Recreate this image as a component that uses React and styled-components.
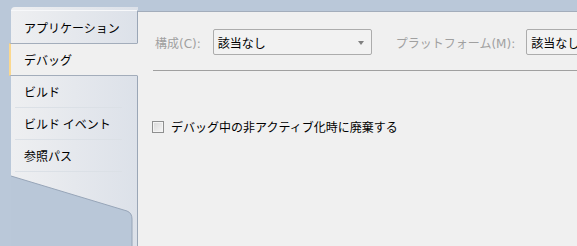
import React from "react";
import styled, { createGlobalStyle } from "styled-components";

const GlobalStyle = createGlobalStyle`
  html, body {
    margin: 0;
    padding: 0;
    height: 100%;
    overflow: hidden;
  }
  body {
    font-family: "Noto Sans CJK JP", "Noto Sans", sans-serif;
    font-size: 12px;
    background: #bac8d9;
  }
  #root {
    height: 100%;
  }
`;

const tabs = ["アプリケーション", "デバッグ", "ビルド", "ビルド イベント", "参照パス"];

function App() {
  return (
    <>
      <GlobalStyle />
      <Page>
        <Sidebar>
          {tabs.map((t, i) => (
            <Tab key={t} $active={i === 1} $first={i === 0}>
              {t}
            </Tab>
          ))}
          <Tail>
            <svg width="126" height="80" viewBox="0 0 126 80">
              <path
                d="M0 4 L116 39 Q121 41 121 47 L121 80 L0 80 Z"
                fill="#b9c7d8"
              />
              <path
                d="M0 4 L116 39 Q121 41 121 47 L121 80"
                fill="none"
                stroke="#97a5b8"
                strokeWidth="1"
              />
            </svg>
          </Tail>
        </Sidebar>
        <Content>
          <Toolbar>
            <Label>構成(C):</Label>
            <Combo>
              該当なし
              <Arrow />
            </Combo>
            <Label $wide>プラットフォーム(M):</Label>
            <Combo>
              該当なし
              <Arrow />
            </Combo>
          </Toolbar>
          <Rule />
          <CheckRow>
            <Check />
            <span>デバッグ中の非アクティブ化時に廃棄する</span>
          </CheckRow>
        </Content>
      </Page>
    </>
  );
}

export default App;

const Page = styled.div`
  display: flex;
  height: 100%;
`;

const Sidebar = styled.div`
  width: 127px;
  margin-left: 11px;
  margin-top: 7px;
  padding-top: 3px;
  display: flex;
  flex-direction: column;
  flex-shrink: 0;
  border-top-left-radius: 4px;
  background: linear-gradient(to right, #eeeff1, #dce1e9);
`;

const Tab = styled.div`
  position: relative;
  display: flex;
  align-items: center;
  box-sizing: border-box;
  height: ${(p) => (p.$first ? "34px" : "32px")};
  padding-left: 13px;
  padding-bottom: 1px;
  color: #000;
  white-space: nowrap;
  border-right: 1px solid #9aa6b6;
  border-top: ${(p) => (p.$first ? "1px solid #f7f8fa" : "none")};

  &::after {
    content: "";
    position: absolute;
    left: 4px;
    right: 15px;
    bottom: 0;
    height: 1px;
    background: #dbe0e6;
  }

  ${(p) =>
    p.$active &&
    `
    height: 33px;
    margin-top: -1px;
    margin-left: -2px;
    padding-left: 13px;
    z-index: 1;
    background: #f0f0f0;
    border-top: 1px solid #a3adbb;
    border-bottom: 1px solid #a3adbb;
    border-left: 2px solid #fbd88e;
    border-right: 1px solid #f0f0f0;
    &::after { display: none; }
  `}
`;

const Tail = styled.div`
  flex: 1;
  position: relative;
  overflow: hidden;
  border-right: 1px solid #9aa6b6;

  svg {
    position: absolute;
    left: 0;
    top: 0;
  }
`;

const Content = styled.div`
  flex: 1;
  min-width: 0;
  margin-top: 11px;
  border-top: 1px solid #a3adbb;
  background: #f0f0f0;
  overflow: hidden;
  padding-top: 17px;
`;

const Toolbar = styled.div`
  display: flex;
  align-items: center;
  padding-left: 17px;
  white-space: nowrap;
`;

const Label = styled.span`
  color: #a0a0a0;
  font-family: "DejaVu Sans", "Noto Sans CJK JP", sans-serif;
  margin-right: ${(p) => (p.$wide ? "11px" : "12px")};
  margin-left: ${(p) => (p.$wide ? "24px" : "0")};
`;

const Combo = styled.div`
  position: relative;
  flex-shrink: 0;
  box-sizing: border-box;
  width: 159px;
  height: 26px;
  display: flex;
  align-items: center;
  padding-left: 4px;
  border: 1px solid #acacac;
  border-radius: 2px;
  background: #f2f2f2;
  color: #000;
`;

const Arrow = styled.span`
  position: absolute;
  right: 7px;
  top: 11px;
  width: 0;
  height: 0;
  border-left: 3.5px solid transparent;
  border-right: 3.5px solid transparent;
  border-top: 4px solid #808080;
`;

const Rule = styled.div`
  height: 1px;
  margin: 15px 0 0 15px;
  background: #a0a0a0;
`;

const CheckRow = styled.div`
  display: flex;
  align-items: center;
  gap: 7px;
  margin-top: 47px;
  padding-left: 14px;
  color: #000;
`;

const Check = styled.span`
  box-sizing: border-box;
  width: 12px;
  height: 12px;
  border: 1px solid #8e8f8f;
  background: linear-gradient(135deg, #d8d8d8, #f6f6f6);
  box-shadow: inset 0 0 0 1px #f4f4f4;
`;
